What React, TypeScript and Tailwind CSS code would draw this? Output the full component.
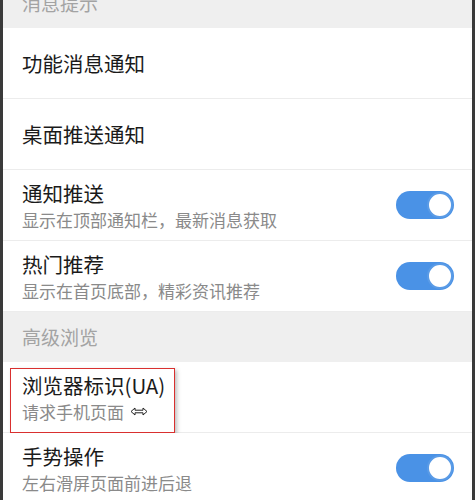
import { ReactNode } from "react";

const font = { fontFamily: '"Noto Sans CJK SC", "Noto Sans", sans-serif' };

function Toggle() {
  return (
    <div className="relative h-[28px] w-[58px] rounded-full bg-[#4a92e6]">
      <div className="absolute right-[1px] top-[1px] h-[26px] w-[26px] rounded-full border-2 border-[#5a9be6] bg-white" />
    </div>
  );
}

function Header({ children }: { children: ReactNode }) {
  return (
    <div className="flex h-[50px] items-center bg-[#efefef] pl-[19px] text-[19px] text-[#a3a3a3]">
      {children}
    </div>
  );
}

function Row({ title, sub, toggle, extra }: { title: string; sub?: ReactNode; toggle?: boolean; extra?: ReactNode }) {
  return (
    <div className="relative flex h-[71px] items-center justify-between border-b border-[#ececec] bg-white pl-[19px] pr-[18px]">
      <div className="flex flex-col">
        <div className="text-[20.5px] leading-[28px] text-[#1a1a1a]">{title}</div>
        {sub && <div className="mt-[1px] text-[17px] leading-[24px] text-[#8a8a8a]">{sub}</div>}
      </div>
      {toggle && <Toggle />}
      {extra}
    </div>
  );
}

function ResizeCursor() {
  return (
    <svg width="18" height="9" viewBox="0 0 18 9" className="ml-[6px] inline-block align-middle">
      <path d="M1 4.5 L5 1 V3.2 H13 V1 L17 4.5 L13 8 V5.8 H5 V8 Z" fill="white" stroke="#222" strokeWidth="1" strokeLinejoin="round" />
    </svg>
  );
}

export default function App() {
  return (
    <div className="flex h-[500px] w-[475px] overflow-hidden bg-[#333]" style={font}>
      <div className="w-[3px] bg-[#3a3a3a]" />
      <div className="flex w-[469px] flex-col bg-white">
        <div className="-mt-[22px]">
          <Header>消息提示</Header>
          <Row title="功能消息通知" />
          <Row title="桌面推送通知" />
          <Row title="通知推送" sub="显示在顶部通知栏，最新消息获取" toggle />
          <Row title="热门推荐" sub="显示在首页底部，精彩资讯推荐" toggle />
          <Header>高级浏览</Header>
          <Row
            title="浏览器标识(UA)"
            sub={
              <span className="flex items-center">
                请求手机页面
                <ResizeCursor />
              </span>
            }
            extra={
              <div className="absolute left-[7px] top-[6px] h-[65px] w-[165px] border-[1.5px] border-[#d9302f] shadow-[2px_2px_4px_rgba(0,0,0,0.25)]" />
            }
          />
          <Row title="手势操作" sub="左右滑屏页面前进后退" toggle />
        </div>
      </div>
      <div className="flex-1 bg-[#3a3a3a]" />
    </div>
  );
}
